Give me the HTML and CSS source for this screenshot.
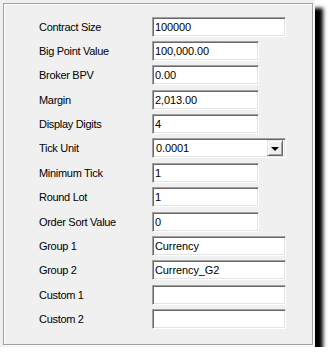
FILE: index.html
```html
<!DOCTYPE html>
<html lang="en">
<head>
  <meta charset="UTF-8">
  <title>Instrument Settings</title>
  <link rel="stylesheet" href="styles.css">
</head>
<body>
  <div class="panel">
    <div class="group">
      <label class="label">Contract Size</label>
      <input class="field wide" type="text" value="100000">

      <label class="label">Big Point Value</label>
      <input class="field" type="text" value="100,000.00">

      <label class="label">Broker BPV</label>
      <input class="field" type="text" value="0.00">

      <label class="label">Margin</label>
      <input class="field" type="text" value="2,013.00">

      <label class="label">Display Digits</label>
      <input class="field" type="text" value="4">

      <label class="label">Tick Unit</label>
      <div class="field wide combo">
        <span class="combo-text">0.0001</span>
        <span class="combo-btn"><span class="arrow"></span></span>
      </div>

      <label class="label">Minimum Tick</label>
      <input class="field" type="text" value="1">

      <label class="label">Round Lot</label>
      <input class="field" type="text" value="1">

      <label class="label">Order Sort Value</label>
      <input class="field" type="text" value="0">

      <label class="label">Group 1</label>
      <input class="field wide" type="text" value="Currency">

      <label class="label">Group 2</label>
      <input class="field wide" type="text" value="Currency_G2">

      <label class="label">Custom 1</label>
      <input class="field wide" type="text" value="">

      <label class="label">Custom 2</label>
      <input class="field wide" type="text" value="">
    </div>
  </div>
</body>
</html>
```

FILE: styles.css
```css
body {
  margin: 0;
  padding: 0;
  background-color: #fff;
  font-family: "Liberation Sans", Arial, sans-serif;
  font-size: 11px;
  color: #000;
}

.panel {
  width: 315px;
  height: 347px;
  box-sizing: border-box;
  padding: 3px 2px 2px 3px;
  background-color: #f0f0f0;
  box-shadow: 8px 8px 4px #000;
}

.group {
  box-sizing: border-box;
  height: 100%;
  border: 1px solid #a0a0a0;
  box-shadow: inset 1px 1px 0 #fff, 1px 1px 0 #fff;
  padding: 12.5px 0 0 35px;
  display: grid;
  grid-template-columns: 113px auto;
  grid-auto-rows: 20px;
  row-gap: 4.4px;
  align-items: center;
}

.label {
  letter-spacing: -0.3px;
  white-space: nowrap;
}

.field {
  box-sizing: border-box;
  width: 107px;
  height: 20px;
  margin: 0;
  padding: 0 0 0 2px;
  border: 1px solid;
  border-color: #a0a0a0 #fff #fff #a0a0a0;
  box-shadow: inset 1px 1px 0 #696969, inset -1px -1px 0 #e3e3e3;
  background-color: #fff;
  font-family: "Liberation Sans", Arial, sans-serif;
  font-size: 11px;
  letter-spacing: -0.1px;
  color: #000;
  outline: none;
}

.wide {
  width: 134px;
}

.combo {
  display: flex;
  align-items: center;
  justify-content: space-between;
  padding: 0 2px 0 3px;
}

.combo-btn {
  box-sizing: border-box;
  width: 16px;
  height: 16px;
  border: 1px solid;
  border-color: #e3e3e3 #696969 #696969 #e3e3e3;
  box-shadow: inset 1px 1px 0 #fff, inset -1px -1px 0 #a0a0a0;
  background-color: #f0f0f0;
  display: flex;
  align-items: center;
  justify-content: center;
}

.arrow {
  width: 0;
  height: 0;
  margin-top: 1px;
  border-left: 4px solid transparent;
  border-right: 4px solid transparent;
  border-top: 4px solid #000;
}
```
